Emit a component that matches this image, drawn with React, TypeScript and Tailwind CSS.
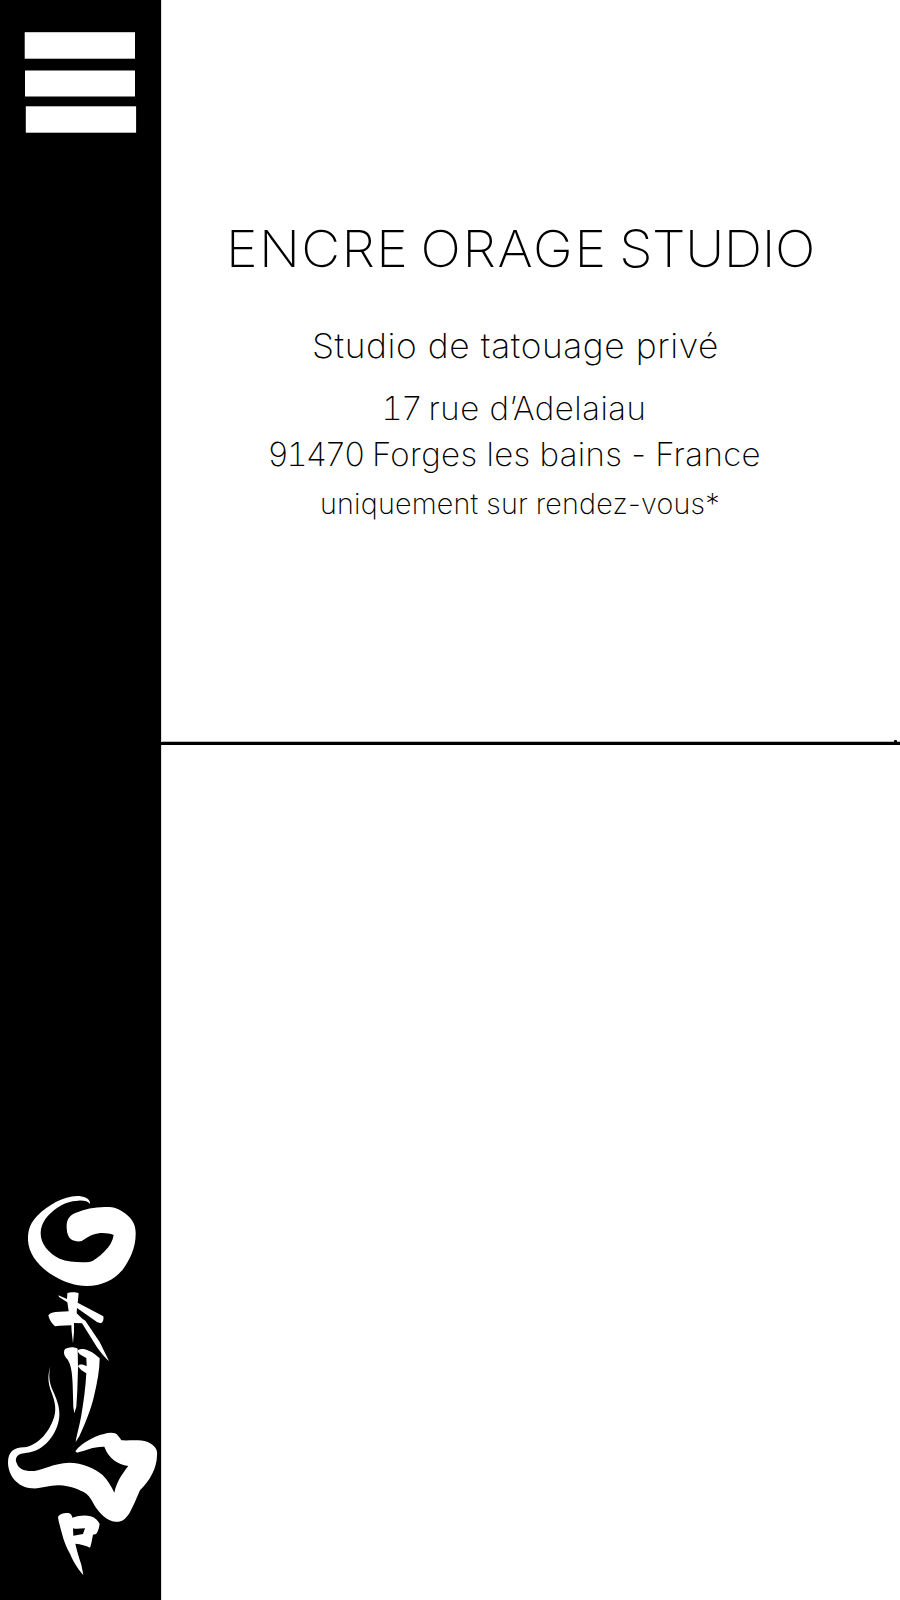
function MenuButton() {
  return (
    <button type="button" aria-label="Menu" className="block h-[150px] w-[161px]">
      <svg width="161" height="150" viewBox="0 0 161 150" fill="#fff">
        <rect x="24.7" y="32.2" width="110.3" height="26.5" />
        <rect x="25" y="70.5" width="110" height="26" />
        <rect x="25.8" y="106.3" width="110.3" height="26.4" />
      </svg>
    </button>
  );
}

function Logo() {
  return (
    <svg width="161" height="420" viewBox="0 0 483 1260" fill="#fff">
      <path d="M270 72C272 56 251 48 231 48C190 50 146 73 112 107C92 128 83 148 84 181C86 225 119 263 162 288C194 307 226 318 260 318C306 318 346 299 370 266C391 237 407 202 407 162C408 131 394 111 368 95C350 83 337 80 314 81C283 82 253 87 226 99C206 108 199 121 200 144C201 161 205 172 213 178C222 184 236 186 245 183C257 175 266 168 278 164C300 157 322 158 341 165C338 184 329 199 314 214C297 231 282 243 268 246C237 248 205 246 179 236C145 220 121 191 122 158C123 128 143 104 171 84C190 71 212 62 235 62C252 61 265 64 270 72Z" />
      <g transform="translate(0 300)">
        <path d="M175 46L201 57L202 40C211 36 227 36 236 40L233 68L310 109C312 118 309 127 303 130L292 127L231 84L230 100L247 116L256 122L299 186L327 243C319 236 306 222 292 203L246 130L222 129L222 155L219 190L215 155L214 136L178 137L165 139C154 131 147 116 145 106C149 100 157 97 166 96L206 94L202 67L177 51Z" />
        <path d="M192 217C192 209 196 205 203 204C214 200 225 202 233 206L234 264L232 330L229 380L223 400L220 382L218 315C217 275 212 246 198 233C194 228 192 223 192 217Z" />
        <path d="M234 210C243 205 256 207 266 212C278 216 290 226 299 235C299 270 292 306 283 344C273 390 254 433 238 469L227 486C230 465 238 440 244 406C251 364 257 321 259 280C249 275 239 267 234 259C236 252 248 252 260 259L259 234C248 228 236 223 233 214Z" />
      </g>
      <g transform="translate(0 720)">
        <path d="M151 -160C145 -134 148 -113 158 -89C169 -65 178 -42 178 -21C180 23 149 72 111 90C91 100 67 98 57 104C47 110 46 119 50 129C55 146 72 155 104 153C130 149 160 130 207 128C248 128 284 145 307 164C324 180 334 199 343 218C350 184 369 158 385 138C352 132 326 116 313 80C280 79 258 91 231 98L226 94C236 78 257 64 286 50C311 41 330 35 345 40C354 44 359 54 364 61C388 63 416 57 443 66C463 75 474 88 471 107C470 145 450 181 420 211C411 230 404 251 389 278C376 299 363 307 346 305C321 303 300 281 284 257C277 244 270 230 259 221C238 209 211 197 178 196C146 195 126 207 95 205C54 201 25 169 24 128C24 96 40 83 72 82C114 77 145 37 158 3C172 -28 165 -55 155 -82C144 -109 142 -134 151 -160Z" />
        <path fillRule="evenodd" d="M174 291C179 282 188 279 203 279C211 279 217 286 217 293C238 286 257 284 272 289C286 293 295 303 299 312C297 324 294 337 288 342L279 344C276 358 274 374 270 383C258 376 243 373 226 371C230 389 236 410 244 434L250 465C239 453 224 434 210 401C191 370 184 332 176 304ZM219 325L220 347L249 342L255 325C241 326 228 328 219 325Z" />
      </g>
    </svg>
  );
}

export default function App() {
  return (
    <div className="flex h-[1600px] w-[900px] overflow-hidden bg-white font-['Inter','Liberation_Sans',sans-serif] text-black">
      <aside className="flex w-[161px] shrink-0 flex-col justify-between bg-black">
        <MenuButton />
        <Logo />
      </aside>
      <main className="flex min-w-0 flex-1 flex-col border-l border-[#ddd]">
        <header className="relative flex h-[742px] shrink-0 flex-col items-start border-b border-[#bbb] pt-[218px] whitespace-nowrap">
          <h1 className="ml-[63.5px] h-[62px] origin-left scale-x-[1.05] text-[51px] leading-[62px] font-[240] [word-spacing:-5px]">
            <span className="tracking-[1.3px]">ENCRE </span>
            <span className="tracking-[1.6px]">ORAGE </span>
            <span className="tracking-[-0.4px]">STUDIO</span>
          </h1>
          <h2 className="mt-[46px] ml-[149.5px] h-[40px] origin-left scale-x-[1.04] text-[34px] leading-[40px] font-extralight tracking-[0.56px]">Studio de tatouage privé</h2>
          <p className="mt-[22px] ml-[219.5px] h-[40px] text-[33px] leading-[40px] font-extralight tracking-[0.5px]">
            <span className="tracking-[-1.5px] tabular-nums">17 </span>rue d’Adelaiau
          </p>
          <p className="mt-[6px] ml-[105.5px] h-[40px] text-[33px] leading-[40px] font-extralight tracking-[0.38px] [word-spacing:-0.8px]">
            <span className="tracking-[-2.2px] tabular-nums">91470</span> Forges les bains - France
          </p>
          <p className="mt-[12px] ml-[158px] h-[36px] origin-left scale-x-[1.025] text-[28px] leading-[36px] font-extralight tracking-[0.2px] [word-spacing:-0.5px]">uniquement sur rendez-vous*</p>
          <span className="absolute right-[3px] -bottom-px h-[2px] w-[3px] rounded-t-[1px] bg-black" />
        </header>
        <hr className="-ml-px h-[3px] shrink-0 border-0 bg-black" />
        <section className="flex-1" />
      </main>
    </div>
  );
}
